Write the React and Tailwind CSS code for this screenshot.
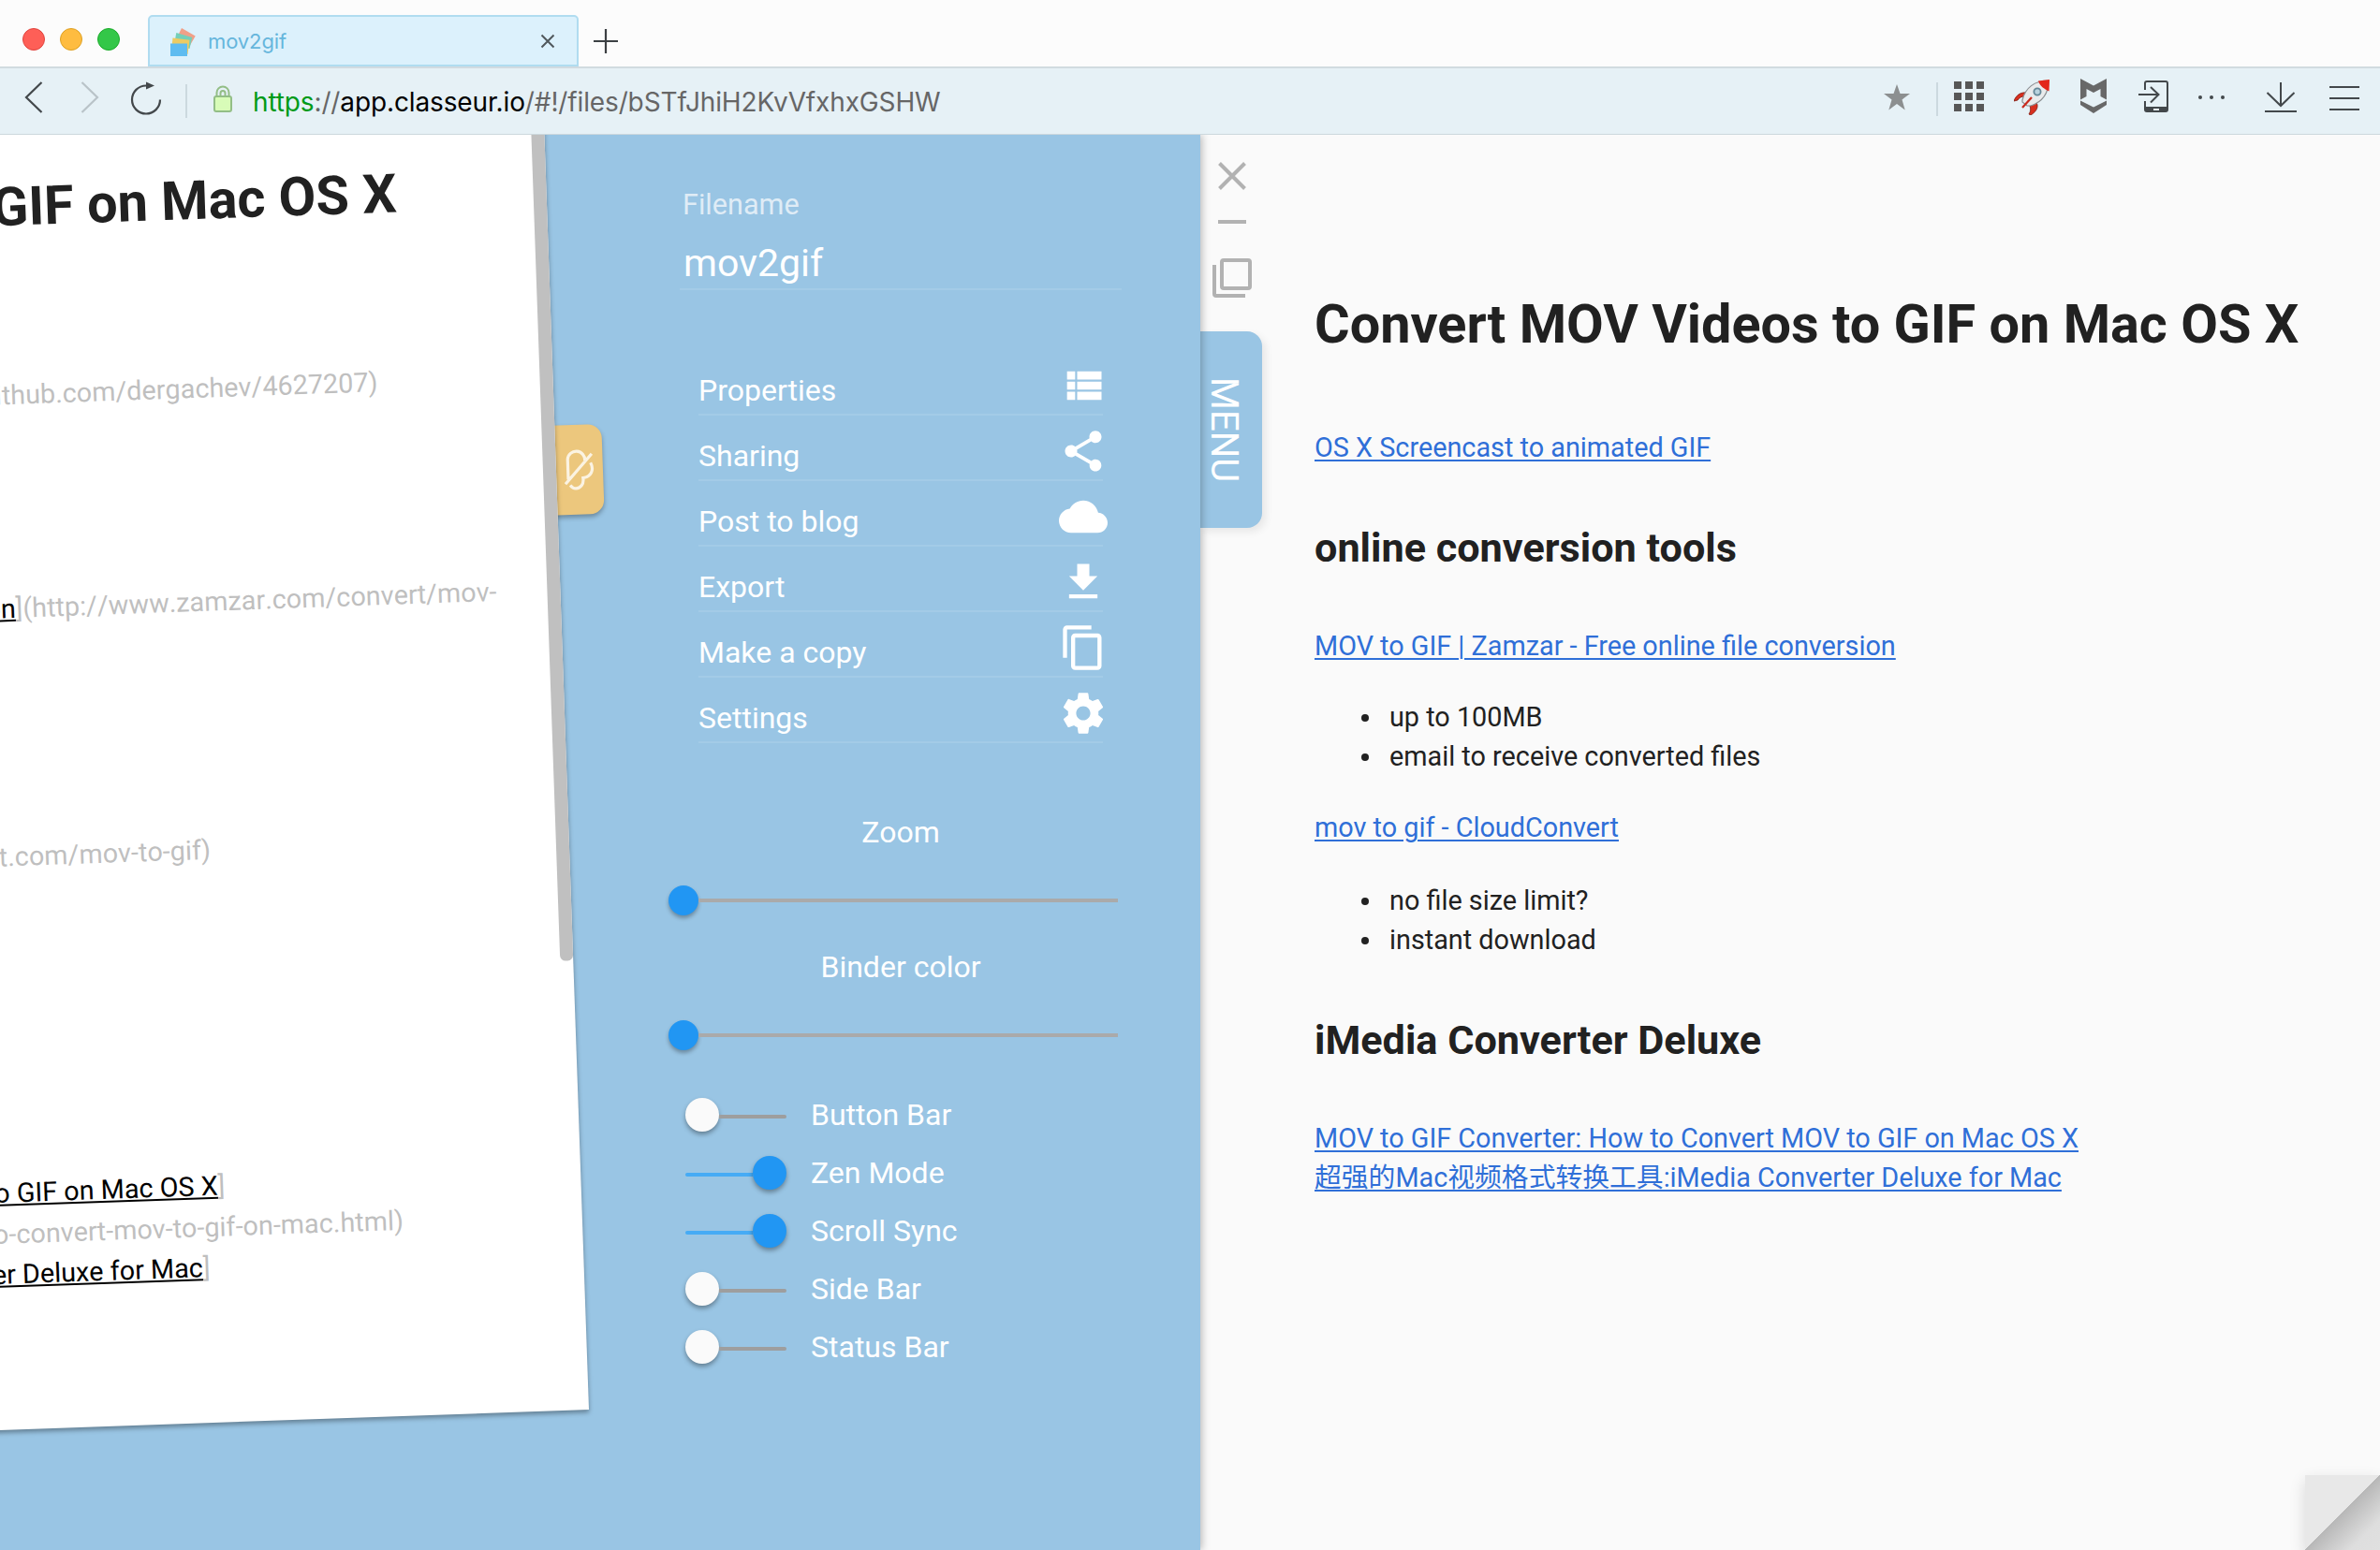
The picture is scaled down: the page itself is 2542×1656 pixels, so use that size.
const ROBOTO = "font-['Roboto','Noto_Sans_CJK_SC',sans-serif]";

const MENU_ITEMS = [
  ["Properties", "M4 14h4v-4H4v4zm0 5h4v-4H4v4zM4 9h4V5H4v4zm5 5h12v-4H9v4zm0 5h12v-4H9v4zM9 5v4h12V5H9z"],
  ["Sharing", "M18 16.08c-.76 0-1.44.3-1.96.77L8.91 12.7c.05-.23.09-.46.09-.7s-.04-.47-.09-.7l7.05-4.11c.54.5 1.25.81 2.04.81 1.66 0 3-1.34 3-3s-1.34-3-3-3-3 1.34-3 3c0 .24.04.47.09.7L8.04 9.81C7.5 9.31 6.79 9 6 9c-1.66 0-3 1.34-3 3s1.34 3 3 3c.79 0 1.5-.31 2.04-.81l7.12 4.16c-.05.21-.08.43-.08.65 0 1.61 1.31 2.92 2.92 2.92 1.61 0 2.92-1.31 2.92-2.92s-1.31-2.92-2.92-2.92z"],
  ["Post to blog", "M19.35 10.04C18.67 6.59 15.64 4 12 4 9.11 4 6.6 5.64 5.35 8.04 2.34 8.36 0 10.91 0 14c0 3.31 2.69 6 6 6h13c2.76 0 5-2.24 5-5 0-2.64-2.05-4.78-4.65-4.96z"],
  ["Export", "M19 9h-4V3H9v6H5l7 7 7-7zM5 18v2h14v-2H5z"],
  ["Make a copy", "M16 1H4c-1.1 0-2 .9-2 2v14h2V3h12V1zm3 4H8c-1.1 0-2 .9-2 2v14c0 1.1.9 2 2 2h11c1.1 0 2-.9 2-2V7c0-1.1-.9-2-2-2zm0 16H8V7h11v14z"],
  ["Settings", "M19.43 12.98c.04-.32.07-.64.07-.98s-.03-.66-.07-.98l2.11-1.65c.19-.15.24-.42.12-.64l-2-3.46c-.12-.22-.39-.3-.61-.22l-2.49 1c-.52-.4-1.08-.73-1.69-.98l-.38-2.65C14.46 2.18 14.25 2 14 2h-4c-.25 0-.46.18-.49.42l-.38 2.65c-.61.25-1.17.59-1.69.98l-2.49-1c-.23-.09-.49 0-.61.22l-2 3.46c-.13.22-.07.49.12.64l2.11 1.65c-.04.32-.07.65-.07.98s.03.66.07.98l-2.11 1.65c-.19.15-.24.42-.12.64l2 3.46c.12.22.39.3.61.22l2.49-1c.52.4 1.08.73 1.69.98l.38 2.65c.03.24.24.42.49.42h4c.25 0 .46-.18.49-.42l.38-2.65c.61-.25 1.17-.59 1.69-.98l2.49 1c.23.09.49 0 .61-.22l2-3.46c.12-.22.07-.49-.12-.64l-2.11-1.65zM12 15.5c-1.93 0-3.5-1.57-3.5-3.5s1.57-3.5 3.5-3.5 3.5 1.57 3.5 3.5-1.57 3.5-3.5 3.5z"],
];

const SWITCHES = [
  ["Button Bar", false],
  ["Zen Mode", true],
  ["Scroll Sync", true],
  ["Side Bar", false],
  ["Status Bar", false],
];

function TabStrip() {
  return (
    <div className="flex h-[71px] shrink-0 items-end bg-[#fcfcfc]">
      <div className="mb-[17px] ml-6 flex gap-4">
        <span className="size-6 rounded-full border border-[#e0443e] bg-[#fe5f57]" />
        <span className="size-6 rounded-full border border-[#dea123] bg-[#febc40]" />
        <span className="size-6 rounded-full border border-[#1aab29] bg-[#33c748]" />
      </div>
      <div className="ml-[30px] flex h-[55px] w-[460px] items-center rounded-t-[5px] border-2 border-[#b0dcf0] bg-[#dcf1fc]">
        <svg className="ml-[20px] h-8 w-8 shrink-0" viewBox="0 0 32 32">
          <path d="M14 2l14.700 8.500L21.700 22.500 8 14z" fill="#f0a088" />
          <path d="M8.300 7l17 5L22.500 24 6 20z" fill="#74cfb9" />
          <path d="M4.500 12.500l18 2.300L20.500 30 3 26z" fill="#eccb62" />
          <path d="M2 18.500h18V32H2z" fill="#5fbcf0" />
        </svg>
        <span className="ml-[10px] font-['Inter',sans-serif] text-[22px] leading-8 tracking-[-0.1px] text-[#66b6dc]">mov2gif</span>
        <svg className="ml-auto mr-[23px] size-4" viewBox="0 0 16 16" fill="none" stroke="#50585c" strokeWidth="2">
          <path d="M1.500 1.500l13 13M14.500 1.500l-13 13" />
        </svg>
      </div>
      <svg className="mb-[13px] ml-[15px] size-7" viewBox="0 0 28 28" fill="none" stroke="#3c4043" strokeWidth="2.200">
        <path d="M14 1v26M1 14h26" />
      </svg>
    </div>
  );
}

function Rocket() {
  return (
    <svg className="ml-[32px] h-[38px] w-[38px]" viewBox="0 0 38 38">
      <path d="M14 14C7 13 2 17 0 23l4-1c2-3 4-4 8-4zM24 25c2 2 2 8-6 13l-2-1c2-3 2-6 1-9z" fill="#d8301f" stroke="#7c1a12" strokeWidth=".8" />
      <path d="M9 22C12 9 22 1 37 1c0 14-7 23-19 27l-4 0-5-4z" fill="#e9ebec" stroke="#8b8f92" strokeWidth="1.200" />
      <path d="M26 1.500L38 0l-.5 12.500C32 10 28 7 26 1.500z" fill="#e3261a" />
      <circle cx="25" cy="13" r="3.600" fill="#b9d3de" stroke="#648797" strokeWidth="1.800" />
      <path d="M19 19L9 30" stroke="#c92a1c" strokeWidth="2.200" />
    </svg>
  );
}

function Toolbar() {
  return (
    <div className="flex h-[73px] shrink-0 items-center border-b border-t-2 border-b-[#ccd8dd] border-t-[#d1dbe0] bg-[#e6f1f6] pb-2">
      <svg className="ml-[26px] h-[34px] w-5" viewBox="0 0 20 34" fill="none" stroke="#43484b" strokeWidth="2.200">
        <path d="M18.500 1L2 17l16.500 16" />
      </svg>
      <svg className="ml-[40px] h-[34px] w-5" viewBox="0 0 20 34" fill="none" stroke="#b9c3c8" strokeWidth="2.200">
        <path d="M1.500 1L18 17 1.500 33" />
      </svg>
      <svg className="ml-[32px] mt-0.5 h-9 w-9" viewBox="0 0 36 36" fill="none" stroke="#43484b" strokeWidth="2.200">
        <path d="M33 19.500A15 15 0 1 1 18 4.500" />
        <path d="M18 .5l9 4-9 4z" fill="#43484b" stroke="none" />
      </svg>
      <span className="ml-[24px] mt-2 h-9 w-0.5 bg-[#ccd9df]" />
      <svg className="ml-7 mt-1 h-[30px] w-5" viewBox="0 0 20 30" fill="none" stroke="#93be86" strokeWidth="2">
        <path d="M3.500 12V8a6.500 6.500 0 0 1 13 0v4M7.500 12V8.500a2.500 2.500 0 0 1 5 0V12" />
        <rect x="1" y="12" width="18" height="16" rx="2" fill="#d8fcb8" />
      </svg>
      <span className="ml-[22px] mt-[10px] whitespace-nowrap font-['Inter',sans-serif] text-[28px] leading-9 tracking-[-0.13px] text-[#666]">
        <span className="text-[#009a18]">https</span>://<span className="text-black">app.classeur.io</span>/#!/files/bSTfJhiH2KvVfxhxGSHW
      </span>
      <div className="ml-auto mr-[22px] flex items-center">
        <svg className="h-[28px] w-[28px]" viewBox="0 0 28 28" fill="#8c8f90">
          <path d="M14 0l3.500 10H28l-8.500 6.500L22.700 27.500 14 21 5.300 27.500l3.200-11L0 10h10.500z" />
        </svg>
        <span className="ml-[28px] mt-1 h-9 w-0.5 bg-[#ccd9df]" />
        <div className="mb-0.5 ml-[17px] grid grid-cols-3 gap-1">
          {Array.from({ length: 9 }, (_, i) => (
            <span key={i} className="size-2 bg-[#575757]" />
          ))}
        </div>
        <Rocket />
        <svg className="mb-0.5 ml-[33px] h-[38px] w-7" viewBox="0 0 28 38" fill="#686868">
          <path d="M0 0l14 7.500L28 0v22.500L21.500 19V11L14 15 6.500 11v8L0 22.500z" />
          <path d="M0 23.500l14 7 14-7V28L14 37 0 28z" />
        </svg>
        <svg className="mb-0.5 ml-[34px] h-[34px] w-8" viewBox="0 0 32 34" fill="none" stroke="#43484b" strokeWidth="2">
          <path d="M7 10V3q0-2 2-2h20q2 0 2 2v28q0 2-2 2H9q-2 0-2-2v-9M0 15h21M13 7l8.500 8L13 23.500" />
          <path d="M7 28h24v4q0 1-1 1H8q-1 0-1-1z" fill="#43484b" stroke="none" />
          <path d="M16 31h6" stroke="#e6f1f6" />
        </svg>
        <div className="ml-8 flex gap-2">
          <span className="size-1 rounded-full bg-[#43484b]" />
          <span className="size-1 rounded-full bg-[#43484b]" />
          <span className="size-1 rounded-full bg-[#43484b]" />
        </div>
        <svg className="ml-[43px] h-[34px] w-[34px]" viewBox="0 0 34 34" fill="none" stroke="#43484b" strokeWidth="2">
          <path d="M17 1v25M2.500 12L17 26l14.500-14M0 32h34" />
        </svg>
        <div className="ml-[35px] mt-0.5 flex w-8 flex-col gap-[10px]">
          <span className="h-0.5 bg-[#43484b]" />
          <span className="h-0.5 bg-[#43484b]" />
          <span className="h-0.5 bg-[#43484b]" />
        </div>
      </div>
    </div>
  );
}

/* Editor sheet, tilted around its bottom right corner. */
function EditorSheet() {
  return (
    <div className="absolute bottom-[150px] left-[-171px] h-[1500px] w-[800px] origin-bottom-right -rotate-2">
      <div className="absolute left-[780px] top-[448px] flex h-24 w-[70px] items-center justify-end rounded-r-[15px] bg-[#ecc77d] pr-[8px] shadow-[0_3px_5px_rgba(0,0,0,0.3)]">
        <svg className="h-[46px] w-[34px]" viewBox="0 0 34 46" fill="none" stroke="#fbf3e2" strokeWidth="3.200">
          <path d="M4.700 33V11.500A9.200 9.200 0 0 1 23 13.500M30.500 6.500L1.500 38M29 16C33 24 29 31 20.500 32 21.500 39 17 43 12.500 43 10 43 8 41.500 6.500 39.500" />
        </svg>
      </div>
      <div className="absolute inset-0 bg-white shadow-[0_3px_5px_rgba(0,0,0,0.35)]">
        <div className="absolute right-0 top-0 h-[1020px] w-[14px] rounded-b-[6px] bg-[#c0c0c0]" />
        <div className="flex flex-col items-end whitespace-nowrap text-[28.8px] leading-[43.6px] text-[#bfbfbf] [font-kerning:none]">
          <div className="mr-[160px] mt-[163px] text-[57.6px] font-bold leading-[64px] text-[#212121] [font-kerning:auto]">GIF on Mac OS X</div>
          <div className="mr-[187px] mt-[147px]">ithub.com/dergachev/4627207)</div>
          <div className="mr-[68px] mt-[184.4px]"><span className="text-black underline">on</span>](http://www.zamzar.com/convert/mov-</div>
          <div className="mr-[383px] mt-[221.400px]">rt.com/mov-to-gif)</div>
          <div className="mr-[380px] mt-[315.400px]"><span className="text-black underline">to GIF on Mac OS X</span>]</div>
          <div className="mr-[191px]">to-convert-mov-to-gif-on-mac.html)</div>
          <div className="mr-[399px]"><span className="text-black underline">ter Deluxe for Mac</span>]</div>
        </div>
      </div>
    </div>
  );
}

function Slider({ label }) {
  return (
    <div className="w-[480px]">
      <div className="ml-4 text-center leading-[38px]">{label}</div>
      <div className="mt-[38px] flex h-8 items-center">
        <span className="size-8 shrink-0 rounded-full bg-[#2196f3] shadow-[0_3px_4px_rgba(0,0,0,0.3)]" />
        <span className="h-1 grow bg-[#aaaaaa]" />
      </div>
    </div>
  );
}

function Switch({ label, on }) {
  return (
    <div className="flex h-[62px] items-center">
      <div className={on ? "flex w-[108px] flex-row-reverse items-center" : "flex w-[108px] items-center"}>
        <span className={on ? "size-9 shrink-0 rounded-full bg-[#2196f3] shadow-[0_3px_5px_rgba(0,0,0,0.35)]" : "size-9 shrink-0 rounded-full bg-[#fafafa] shadow-[0_3px_5px_rgba(0,0,0,0.35)]"} />
        <span className={on ? "mt-1 h-1 grow rounded-l-sm bg-[#46abf5]" : "mt-1 h-1 grow rounded-r-sm bg-[#9e9e9e]"} />
      </div>
      <span className="ml-[26px]">{label}</span>
    </div>
  );
}

function MenuPanel() {
  return (
    <div className="ml-[714px] flex flex-col pt-[56px] text-[32px] leading-[38px] text-white">
      <div className="ml-[15px] text-[30.6px] text-white/70">Filename</div>
      <div className="ml-3 mt-[19px] h-[53px] w-[472px] border-b-2 border-white/10 pl-1 text-[41px] leading-[48px]">mov2gif</div>
      <div className="ml-8 mt-[64px] w-[432px]">
        {MENU_ITEMS.map(([label, d]) => (
          <div key={label} className="flex h-[70px] items-end border-b-2 border-white/10">
            <span className="mb-[6px]">{label}</span>
            <svg className="-mr-[5px] mb-1 ml-auto size-[52px]" viewBox="0 0 24 24" fill="currentColor">
              <path d={d} />
            </svg>
          </div>
        ))}
      </div>
      <div className="mt-[76px] flex flex-col gap-[36px]">
        <Slider label="Zoom" />
        <Slider label="Binder color" />
      </div>
      <div className="ml-[18px] mt-[38px]">
        {SWITCHES.map(([label, on]) => (
          <Switch key={label} label={label} on={on} />
        ))}
      </div>
    </div>
  );
}

function Link({ children }) {
  return (
    <a className="text-[#2f6fd8] underline decoration-2 underline-offset-[3px]">{children}</a>
  );
}

function Bullets({ items }) {
  return (
    <ul>
      {items.map((t) => (
        <li key={t} className="flex items-center">
          <span className="ml-[50px] mr-[22px] mt-0.5 size-2 rounded-full bg-[#212121]" />
          {t}
        </li>
      ))}
    </ul>
  );
}

function Preview() {
  return (
    <div className="ml-14 flex grow flex-col whitespace-nowrap pt-[171px] text-[28.8px] leading-[42px] text-[#212121]">
      <h1 className="text-[57.6px] font-bold leading-[64px]">Convert MOV Videos to GIF on Mac OS X</h1>
      <p className="mt-[78px]"><Link>OS X Screencast to animated GIF</Link></p>
      <h2 className="mt-[62px] text-[43.2px] font-bold leading-[50px]">online conversion tools</h2>
      <p className="mt-[58px]"><Link>MOV to GIF | Zamzar - Free online file conversion</Link></p>
      <div className="mt-[34px]"><Bullets items={["up to 100MB", "email to receive converted files"]} /></div>
      <p className="mt-[34px]"><Link>mov to gif - CloudConvert</Link></p>
      <div className="mt-[36px]"><Bullets items={["no file size limit?", "instant download"]} /></div>
      <h2 className="mt-[62px] text-[43.2px] font-bold leading-[50px]">iMedia Converter Deluxe</h2>
      <p className="mt-[58px] h-[42px]"><Link>MOV to GIF Converter: How to Convert MOV to GIF on Mac OS X</Link></p>
      <p className="h-[42px]"><Link>超强的Mac视频格式转换工具:iMedia Converter Deluxe for Mac</Link></p>
    </div>
  );
}

function SideButtons() {
  return (
    <div className="flex w-[66px] shrink-0 flex-col">
      <svg className="ml-[19px] mt-[29px] size-[30px]" viewBox="0 0 30 30" fill="none" stroke="#b2b2b2" strokeWidth="4">
        <path d="M1.500 1.500l27 27M28.500 1.500l-27 27" />
      </svg>
      <span className="ml-[19px] mt-[32px] h-1 w-[30px] bg-[#b2b2b2]" />
      <svg className="ml-[13px] mt-[37px] size-[42px]" viewBox="0 0 42 42" fill="none" stroke="#b2b2b2" strokeWidth="4">
        <rect x="10" y="2" width="30" height="30" rx="2" />
        <path d="M2 7v31q0 2 2 2h31" />
      </svg>
      <div className="mt-[36px] flex h-[210px] items-center justify-center rounded-r-[16px] bg-[#99c5e4] shadow-[4px_4px_8px_rgba(0,0,0,0.08)]">
        <span className="mr-[17px] text-[40px] leading-[40px] text-white [writing-mode:vertical-rl]">MENU</span>
      </div>
    </div>
  );
}

export default function App() {
  return (
    <div className={`flex h-[1656px] w-[2542px] flex-col overflow-hidden ${ROBOTO}`}>
      <TabStrip />
      <Toolbar />
      <div className="relative flex grow overflow-hidden bg-[#fafafa]">
        <div className="relative w-[1282px] shrink-0 bg-[#99c5e4] shadow-[2px_0_8px_rgba(0,0,0,0.25)]">
          <EditorSheet />
          <MenuPanel />
        </div>
        <SideButtons />
        <Preview />
        <div className="absolute bottom-0 right-0 size-20 bg-[linear-gradient(135deg,#e8e8e8_50%,#b8b8b8_50%,#dedede_80%,#e0e0e0)] shadow-[0_6px_16px_rgba(0,0,0,0.14)]" />
      </div>
    </div>
  );
}
